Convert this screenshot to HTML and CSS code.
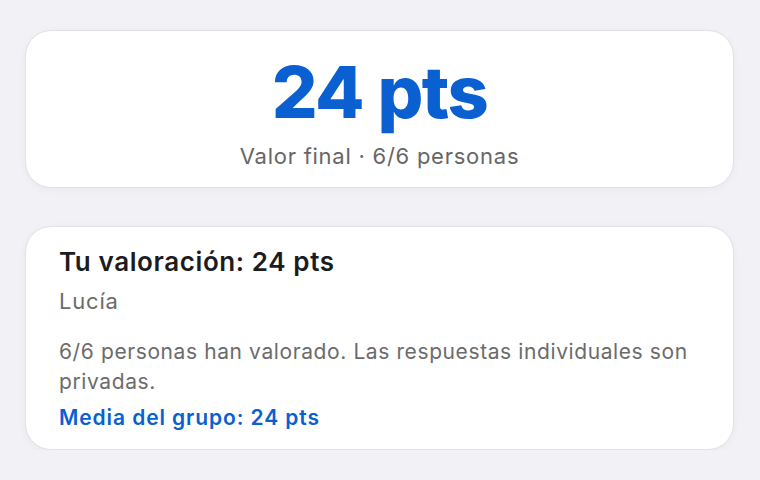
FILE: index.html
```html
<!DOCTYPE html>
<html lang="es">
<head>
  <meta charset="UTF-8">
  <meta name="viewport" content="width=device-width, initial-scale=1.0">
  <title>Resultado</title>
  <link rel="stylesheet" href="styles.css">
</head>
<body>

  <div class="results">
    <div class="card score-card">
      <div class="score-value">24 pts</div>
      <div class="score-meta">Valor final · 6/6 personas</div>
    </div>

    <div class="card vote-card">
      <h2 class="vote-title">Tu valoración: 24 pts</h2>
      <p class="vote-user">Lucía</p>
      <p class="vote-note">6/6 personas han valorado. Las respuestas individuales son privadas.</p>
      <p class="vote-average">Media del grupo: 24 pts</p>
    </div>
  </div>

</body>
</html>
```

FILE: styles.css
```css
body {
  font-family: Inter, "Noto Sans", sans-serif;
  margin: 0;
  padding: 0;
  background-color: #f2f2f6;
}
.results {
  display: flex;
  flex-direction: column;
  gap: 38px;
  padding: 30px 26px 0 25px;
}
.card {
  background-color: white;
  border: 1px solid #e1e1e6;
  border-radius: 26px;
  box-shadow: 0 2px 8px rgba(0, 0, 0, 0.04);
}
.score-card {
  height: 158px;
  box-sizing: border-box;
  padding-top: 25px;
  text-align: center;
}
.score-value {
  font-size: 72px;
  font-weight: 800;
  line-height: 1;
  color: #0a5fd1;
  letter-spacing: -1.5px;
}
.score-meta {
  margin-top: 15px;
  font-size: 22px;
  letter-spacing: 0.75px;
  color: #666;
}
.vote-card {
  padding: 19px 33px 19px;
}
.vote-title {
  margin: 0;
  font-size: 26px;
  font-weight: 600;
  letter-spacing: 0.6px;
  color: #1c1c1e;
}
.vote-user {
  margin: 11px 0 0;
  font-size: 22px;
  letter-spacing: 0.8px;
  color: #6b6b6b;
}
.vote-note {
  margin: 23px 0 0;
  font-size: 21px;
  line-height: 30px;
  letter-spacing: 0.6px;
  color: #6b6b6b;
}
.vote-average {
  margin: 8px 0 0;
  font-size: 21px;
  font-weight: 600;
  letter-spacing: 0.9px;
  color: #0a5fd1;
}
```
